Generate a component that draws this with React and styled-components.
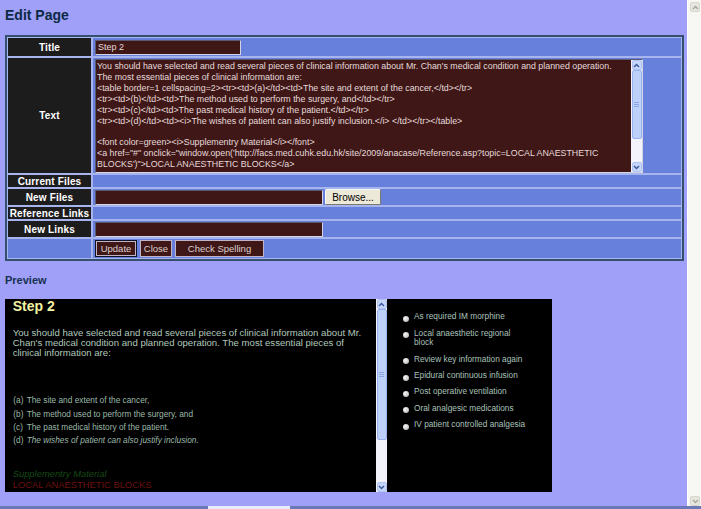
import React from "react";
import styled, { createGlobalStyle } from "styled-components";

const GlobalStyle = createGlobalStyle`
  * { box-sizing: border-box; }
  html, body { margin: 0; padding: 0; width: 701px; height: 509px; overflow: hidden; background: #a0a0f8; }
  body { font-family: "Liberation Sans", Arial, sans-serif; }
`;

const Frame = styled.div`
  display: flex;
  flex-direction: column;
  width: 701px;
  height: 509px;
`;

const Viewport = styled.div`
  flex: 1;
  display: flex;
  min-height: 0;
`;

const Page = styled.main`
  flex: 1;
  min-width: 0;
  background: #a0a0f8;
  padding: 7px 0 0 5px;
  overflow: hidden;
`;

const PageTitle = styled.h1`
  margin: 0 0 12px;
  font-size: 14px;
  line-height: 16px;
  font-weight: bold;
  color: #0c2a44;
`;

const FormTable = styled.div`
  width: 679px;
  border: 2px solid #34506e;
  background: #a8b4ee;
  padding: 1px;
  display: grid;
  grid-template-columns: 83px 1fr;
  grid-template-rows: 18px 115px 12px 16px 12px 16px 19px;
  gap: 2px;
`;

const Label = styled.div`
  background: #1c1c1c;
  color: #ffffff;
  font-size: 10px;
  font-weight: bold;
  letter-spacing: 0.15px;
  display: flex;
  align-items: center;
  justify-content: center;
  white-space: nowrap;
`;

const Cell = styled.div`
  background: #6680dc;
  display: flex;
  align-items: ${(p) => (p.$top ? "flex-start" : "center")};
  padding: ${(p) => (p.$top ? "1px 0 0 2px" : "0 0 0 2px")};
  gap: ${(p) => p.$gap || 2}px;
`;

const TextInput = styled.input`
  width: ${(p) => p.$w}px;
  height: 15px;
  margin: 0;
  padding: 0 2px;
  background: #3f1717;
  color: #e6dada;
  font-family: inherit;
  font-size: 9px;
  border: 1px solid;
  border-color: #5a5a70 #d4d4e4 #d4d4e4 #5a5a70;
  outline: none;
`;

const AreaBox = styled.div`
  width: 548px;
  height: 114px;
  display: flex;
  background: #3f1717;
  border: 1px solid;
  border-color: #5a5a70 #d4d4e4 #d4d4e4 #5a5a70;
`;

const Area = styled.textarea`
  flex: 1;
  margin: 0;
  padding: 1px 0 0 1px;
  border: none;
  outline: none;
  resize: none;
  overflow: hidden;
  background: transparent;
  color: #e6dada;
  font-family: inherit;
  font-size: 8.85px;
  line-height: 10.9px;
  white-space: pre-wrap;
`;

const ScrollTrack = styled.div`
  width: 11px;
  flex: none;
  display: flex;
  flex-direction: column;
  background: #f3f3fb;
  padding: 0 0.5px;
`;

const ArrowBtn = styled.div`
  height: 10px;
  flex: none;
  background: #c6d6fc;
  border: 1px solid #aec2f2;
  border-radius: 2px;
  display: flex;
  align-items: center;
  justify-content: center;
`;

const Thumb = styled.div`
  height: ${(p) => p.$h}px;
  flex: none;
  background: #bcd0fa;
  border: 1px solid #98b2ee;
  border-radius: 2px;
  display: flex;
  align-items: center;
  justify-content: center;
`;

const Grip = styled.div`
  width: 5px;
  height: 5px;
  border-top: 1px solid #8aa6e6;
  border-bottom: 1px solid #8aa6e6;
  &::after {
    content: "";
    display: block;
    margin-top: 1px;
    height: 1px;
    background: #8aa6e6;
  }
`;

const Spacer = styled.div`
  flex: 1;
`;

const Chevron = ({ down, color = "#3c5a9a" }) => (
  <svg width="7" height="5" viewBox="0 0 7 5">
    <polyline
      points={down ? "1,1 3.5,3.5 6,1" : "1,4 3.5,1.5 6,4"}
      fill="none"
      stroke={color}
      strokeWidth="1.5"
    />
  </svg>
);

const XPScroll = ({ thumb }) => (
  <ScrollTrack>
    <ArrowBtn>
      <Chevron />
    </ArrowBtn>
    <Thumb $h={thumb}>
      <Grip />
    </Thumb>
    <Spacer />
    <ArrowBtn>
      <Chevron down />
    </ArrowBtn>
  </ScrollTrack>
);

const BrowseButton = styled.button`
  width: 56px;
  height: 16px;
  margin: 0;
  padding: 0;
  background: #ece9d8;
  color: #000;
  font-family: inherit;
  font-size: 10px;
  border: 1px solid;
  border-color: #f8f8f4 #7a7a70 #7a7a70 #f8f8f4;
  border-radius: 2px;
`;

const ActionButton = styled.button`
  width: ${(p) => p.$w}px;
  height: 17px;
  margin: 0;
  padding: 0;
  background: #3f1717;
  color: #dccfcf;
  font-family: inherit;
  font-size: 9.5px;
  border: 1px solid ${(p) => (p.$default ? "#0c1424" : "#c2b4c6")};
  box-shadow: ${(p) => (p.$default ? "inset 0 0 0 1px #c2b4c6" : "none")};
`;

const SectionTitle = styled.h2`
  margin: 13px 0 12px;
  font-size: 11px;
  line-height: 13px;
  font-weight: bold;
  color: #163050;
`;

const PreviewBox = styled.section`
  width: 547px;
  height: 193px;
  background: #000;
  display: flex;
`;

const PreviewMain = styled.div`
  width: 371px;
  padding-left: 7.7px;
  overflow: hidden;
`;

const StepTitle = styled.h3`
  margin: 0;
  font-size: 14px;
  line-height: 14px;
  font-weight: bold;
  color: #f2f2a2;
`;

const Para = styled.p`
  margin: 14.5px 0 0;
  width: 358px;
  font-size: 9.6px;
  line-height: 10.4px;
  color: #b0c8bc;
`;

const ItemList = styled.div`
  margin: 35px 0 0 0.6px;
  display: flex;
  flex-direction: column;
`;

const ItemRow = styled.div`
  display: grid;
  grid-template-columns: 13.4px 1fr;
  height: 13.2px;
  align-items: center;
  font-size: 8.3px;
  color: #9cb8a8;
  font-style: ${(p) => (p.$italic ? "italic" : "normal")};
`;

const ItemKey = styled.span`
  font-style: normal;
`;

const Supplement = styled.div`
  margin-top: 22px;
  font-size: 9.4px;
  line-height: 11px;
`;

const SuppLine = styled.div`
  color: ${(p) => p.$color};
  font-style: ${(p) => (p.$italic ? "italic" : "normal")};
`;

const PreviewSide = styled.ul`
  flex: 1;
  margin: 0;
  padding: 9.8px 0 0 15.5px;
  list-style: none;
`;

const SideItem = styled.li`
  display: flex;
  align-items: flex-start;
  padding: 3.4px 0;
`;

const Bullet = styled.span`
  flex: none;
  width: 6px;
  height: 6px;
  margin-top: 3.6px;
  border-radius: 50%;
  background: radial-gradient(circle at 35% 35%, #f4f4f4 0%, #cfcfcf 55%, #9a9a9a 100%);
`;

const SideText = styled.span`
  width: 114.5px;
  margin-left: 5.5px;
  font-size: 8.3px;
  line-height: 9.6px;
  color: #aac2ba;
`;

const WinScroll = styled.div`
  width: 14px;
  flex: none;
  display: flex;
  flex-direction: column;
  background: #f7f7f3;
  border-left: 1px solid #ffffff;
  padding: 2px 1px 0 2px;
`;

const WinArrow = styled.div`
  height: 10px;
  flex: none;
  background: #e6e6de;
  border: 1px solid #d6d6cc;
  border-radius: 2px;
  display: flex;
  align-items: center;
  justify-content: center;
`;

const BottomBar = styled.div`
  height: 3px;
  flex: none;
  display: flex;
  background: #6a78b8;
`;

const BarGap = styled.div`
  width: ${(p) => p.$w}px;
  flex: none;
`;

const BarThumb = styled.div`
  width: 82px;
  flex: none;
  background: #e8ecf8;
`;

const textValue = `You should have selected and read several pieces of clinical information about Mr. Chan's medical condition and planned operation.
The most essential pieces of clinical information are:
<table border=1 cellspacing=2><tr><td>(a)</td><td>The site and extent of the cancer,</td></tr>
<tr><td>(b)</td><td>The method used to perform the surgery, and</td></tr>
<tr><td>(c)</td><td>The past medical history of the patient.</td></tr>
<tr><td>(d)</td><td><i>The wishes of patient can also justify inclusion.</i> </td></tr></table>

<font color=green><i>Supplementry Material</i></font>
<a href="#" onclick="window.open('http://facs.med.cuhk.edu.hk/site/2009/anacase/Reference.asp?topic=LOCAL ANAESTHETIC BLOCKS')">LOCAL ANAESTHETIC BLOCKS</a>`;

const rows = [
  { key: "(a)", text: "The site and extent of the cancer," },
  { key: "(b)", text: "The method used to perform the surgery, and" },
  { key: "(c)", text: "The past medical history of the patient." },
  { key: "(d)", text: "The wishes of patient can also justify inclusion.", italic: true },
];

const options = [
  "As required IM morphine",
  "Local anaesthetic regional block",
  "Review key information again",
  "Epidural continuous infusion",
  "Post operative ventilation",
  "Oral analgesic medications",
  "IV patient controlled analgesia",
];

export default function App() {
  return (
    <>
      <GlobalStyle />
      <Frame>
        <Viewport>
          <Page>
            <PageTitle>Edit Page</PageTitle>
            <FormTable>
              <Label>Title</Label>
              <Cell>
                <TextInput $w={146} defaultValue="Step 2" spellCheck={false} />
              </Cell>

              <Label>Text</Label>
              <Cell $top>
                <AreaBox>
                  <Area defaultValue={textValue} spellCheck={false} />
                  <XPScroll thumb={69} />
                </AreaBox>
              </Cell>

              <Label>Current Files</Label>
              <Cell />

              <Label>New Files</Label>
              <Cell>
                <TextInput $w={228} spellCheck={false} />
                <BrowseButton>Browse...</BrowseButton>
              </Cell>

              <Label>Reference Links</Label>
              <Cell />

              <Label>New Links</Label>
              <Cell>
                <TextInput $w={228} spellCheck={false} />
              </Cell>

              <Cell />
              <Cell $gap={3}>
                <ActionButton $w={42} $default>Update</ActionButton>
                <ActionButton $w={32}>Close</ActionButton>
                <ActionButton $w={89}>Check Spelling</ActionButton>
              </Cell>
            </FormTable>

            <SectionTitle>Preview</SectionTitle>
            <PreviewBox>
              <PreviewMain>
                <StepTitle>Step 2</StepTitle>
                <Para>
                  You should have selected and read several pieces of clinical information about Mr.
                  Chan's medical condition and planned operation. The most essential pieces of
                  clinical information are:
                </Para>
                <ItemList>
                  {rows.map((r) => (
                    <ItemRow key={r.key} $italic={r.italic}>
                      <ItemKey>{r.key}</ItemKey>
                      <span>{r.text}</span>
                    </ItemRow>
                  ))}
                </ItemList>
                <Supplement>
                  <SuppLine $color="#164a16" $italic>Supplementry Material</SuppLine>
                  <SuppLine $color="#6e1010">LOCAL ANAESTHETIC BLOCKS</SuppLine>
                </Supplement>
              </PreviewMain>
              <XPScroll thumb={131} />
              <PreviewSide>
                {options.map((o) => (
                  <SideItem key={o}>
                    <Bullet />
                    <SideText>{o}</SideText>
                  </SideItem>
                ))}
              </PreviewSide>
            </PreviewBox>
          </Page>
          <WinScroll>
            <WinArrow>
              <Chevron color="#a8a8a0" />
            </WinArrow>
            <Spacer />
            <WinArrow>
              <Chevron down color="#a8a8a0" />
            </WinArrow>
          </WinScroll>
        </Viewport>
        <BottomBar>
          <BarGap $w={208} />
          <BarThumb />
        </BottomBar>
      </Frame>
    </>
  );
}
